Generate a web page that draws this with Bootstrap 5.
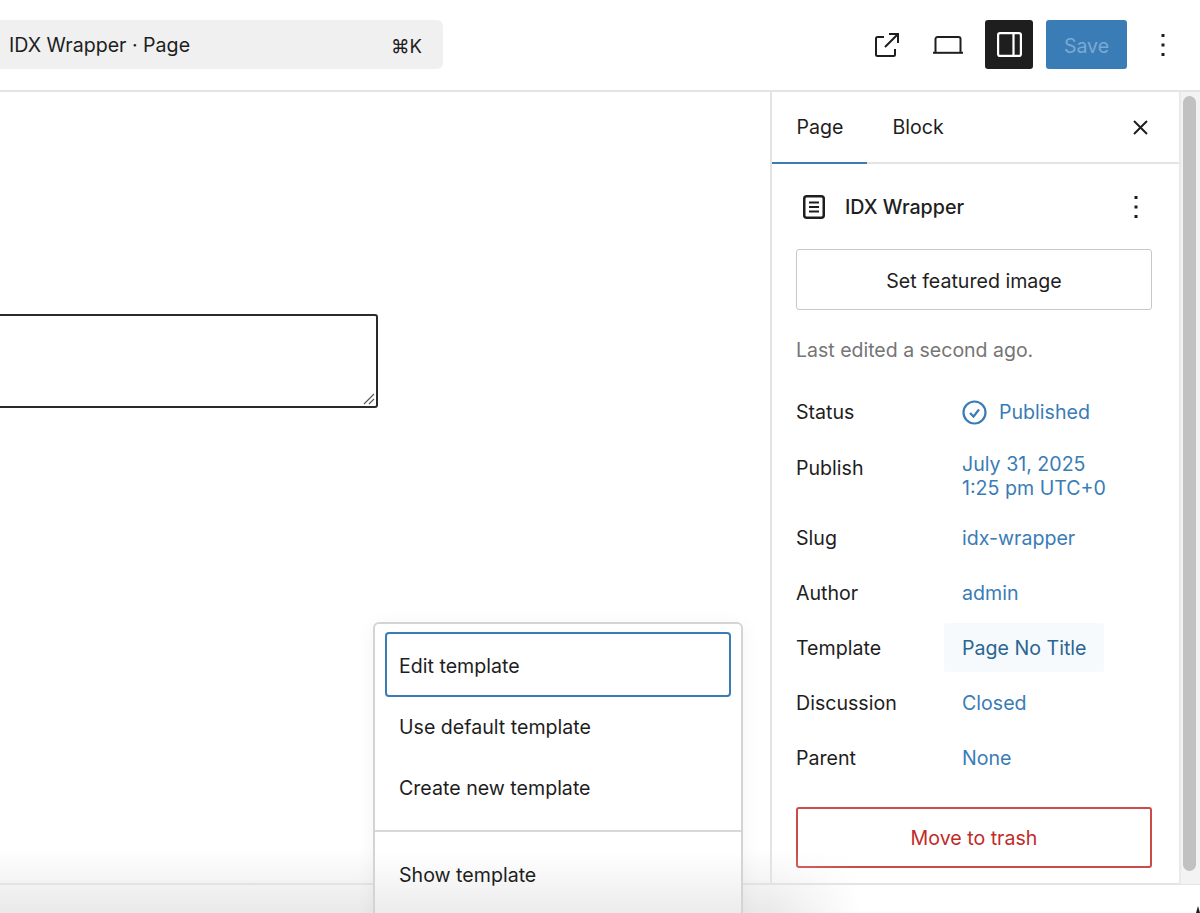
<!DOCTYPE html>
<html lang="en">
<head>
<meta charset="utf-8">
<title>IDX Wrapper</title>
<link href="https://cdn.jsdelivr.net/npm/bootstrap@5.3.0/dist/css/bootstrap.min.css" rel="stylesheet">
<style>
html,body{height:100%;overflow:hidden}
body{font-family:Inter,"Liberation Sans",sans-serif;color:#1e1e1e;background:#fff;font-size:19.6px;line-height:1.2}
.shell{position:relative;width:1200px;height:913px;overflow:hidden}
.topbar{height:92px;border-bottom:2px solid #e4e4e4;padding-top:20px;padding-right:25px}
.cmd{width:443px;height:49px;background:#f0f0f0;border-radius:0 6px 6px 0;padding:3px 21px 0 9px;font-size:19.6px}
.kbd-hint{font-size:18.5px}
.tool-group{height:49px;gap:13px}
.tool{width:48px;height:49px;border-radius:3px}
.tool-dark{background:#1e1e1e}
.save-btn{width:81px;height:49px;background:#3a7cb6;color:#7aaad3;border-radius:3px;font-size:19.5px}
.save-btn:disabled,.save-btn:hover{background:#3a7cb6;color:#7aaad3}
.dots-slot{width:24px;margin-left:11px}
.main-row{height:793px;border-bottom:2px solid #e4e4e4}
.canvas{width:770px}
.sidebar-pane{width:409px;border-left:2px solid #e4e4e4}
.tabs-row{height:72px;border-bottom:2px solid #e4e4e4;padding-right:20px}
.tab-item{height:72px;padding:2px 24px 0;color:#1e1e1e}
.tab-on{border-bottom:2px solid #3a7cb6;margin-bottom:-2px;padding:2px 24px 0 24.5px}
.tab-on + .tab-item{padding-left:25px}
.close-x{width:24px;height:24px;margin-left:auto;margin-right:7px}
.panel{padding:0 25px 0 24px}
.doc-row{height:85px;font-weight:500}
.doc-glyph{margin-left:7px}
.doc-name{margin-left:20px;font-size:19.7px;padding-top:2px}
.doc-more{margin-right:15px}
.outline-btn{height:61px;width:356px;border:1.5px solid #c8c8c8;border-radius:3px;background:#fff;font-size:19.6px;color:#1e1e1e;padding:4px 0 0}
.hint-text{color:#757575;font-size:19.5px;margin:28px 0 0;height:24px;line-height:24px}
.meta-row{display:flex}
.meta-label{width:166px;flex:none;line-height:24px}
.meta-val{color:#3a7cb6;line-height:24px}
.status-glyph{margin-right:12px}
.wrap-status{margin-top:38px;height:24px}
.wrap-publish{margin-top:28px;height:48px}
.wrap-publish .meta-label{padding-top:4px}
.wrap-slug{margin-top:26px;height:24px}
.wrap-plain{margin-top:31px;height:24px}
.tpl-pill{background:#f6fafd;color:#2b6593;padding:12.5px 18px;margin:-13px 0 -12px -18px;border-radius:3px;height:49px}
.trash-btn{height:61px;width:356px;border:2px solid #cc4b48;border-radius:3px;background:#fff;color:#c02b28;font-size:19.6px;margin-top:37px;padding:3px 0 0}
.scroll-track{position:absolute;left:1179px;top:92px;width:21px;height:792px;background:#f3f3f3;border-left:2px solid #e9e9e9}
.scroll-thumb{position:absolute;left:2px;top:4px;width:13px;height:775px;background:#c1c1c1;border-radius:7px}
.text-box{position:absolute;left:-10px;top:314px;width:388px;height:94px;border:2px solid #2a2a2a;border-radius:3px;background:#fff}
.grip{position:absolute;right:0;bottom:0;width:14px;height:14px}
.fade-bottom{position:absolute;left:0;bottom:0;height:63px;width:860px;background:linear-gradient(to bottom,rgba(225,225,225,0),rgba(225,225,225,.75));-webkit-mask-image:linear-gradient(to right,#000 770px,transparent 860px);mask-image:linear-gradient(to right,#000 770px,transparent 860px)}
.popover-menu{position:absolute;left:373px;top:622px;width:370px;height:320px;background:linear-gradient(to bottom,#fff 228px,#ebebeb 291px);border:2px solid #d4d4d4;border-radius:6px;box-shadow:0 3px 20px rgba(0,0,0,.05)}
.menu-top{padding:8px 10px 0;height:208px;border-bottom:2px solid #d8d8d8}
.menu-entry{height:65px;padding:4px 14px 0;margin-bottom:-4px;color:#1e1e1e;border-radius:4px}
.menu-focus{border:2px solid #3a7cb6;padding:4px 12px 0}
.menu-bottom{padding:10px 10px}
.menu-bottom .menu-entry{padding-top:2px}
.cursor-tip{position:absolute;right:0;bottom:0;width:4px;height:7px}
</style>
</head>
<body>
<div class="shell">
  <header class="topbar d-flex justify-content-between align-items-start">
    <div class="cmd d-flex align-items-center justify-content-between">
      <span>IDX Wrapper · Page</span><span class="kbd-hint">⌘K</span>
    </div>
    <div class="tool-group d-flex align-items-center">
      <div class="tool d-flex align-items-center justify-content-center">
        <svg width="24" height="24" viewBox="0 0 24 24" fill="none" stroke="#1e1e1e" stroke-width="2"><path d="M9 4H2.500A1.500 1.500 0 0 0 1 5.500v16A1.500 1.500 0 0 0 2.500 23h16a1.500 1.500 0 0 0 1.500-1.500V16"/><path d="M14 1h9v9M23 1 10 14"/></svg>
      </div>
      <div class="tool d-flex align-items-center justify-content-center">
        <svg width="30" height="18" viewBox="0 0 30 18" fill="none" stroke="#1e1e1e" stroke-width="2"><path d="M2.500 16V3a2 2 0 0 1 2-2h21a2 2 0 0 1 2 2v13"/><path d="M0 16.800h30"/></svg>
      </div>
      <div class="tool tool-dark d-flex align-items-center justify-content-center">
        <svg width="25" height="25" viewBox="0 0 25 25" fill="none" stroke="#fff" stroke-width="2.200"><rect x="1.100" y="1.100" width="22.800" height="22.800" rx="2"/><path d="M16.500 1.100v22.800"/></svg>
      </div>
      <button type="button" class="btn save-btn p-0 pt-1 border-0">Save</button>
      <div class="dots-slot d-flex align-items-center justify-content-center">
        <svg width="6" height="24" viewBox="0 0 6 24" fill="#1e1e1e"><rect x="1.500" y="1" width="3" height="3"/><rect x="1.500" y="10.500" width="3" height="3"/><rect x="1.500" y="20" width="3" height="3"/></svg>
      </div>
    </div>
  </header>
  <div class="main-row d-flex">
    <div class="canvas flex-shrink-0"></div>
    <aside class="sidebar-pane">
      <div class="tabs-row d-flex align-items-center">
        <div class="tab-item tab-on d-flex align-items-center">Page</div>
        <div class="tab-item d-flex align-items-center">Block</div>
        <div class="close-x d-flex align-items-center justify-content-center">
          <svg width="15" height="15" viewBox="0 0 15 15" stroke="#1e1e1e" stroke-width="2" fill="none"><path d="M1 1l13 13M14 1 1 14"/></svg>
        </div>
      </div>
      <div class="panel">
        <div class="doc-row d-flex align-items-center">
          <svg class="doc-glyph" width="22" height="24" viewBox="0 0 22 24" fill="none" stroke="#1e1e1e" stroke-width="2.500"><rect x="1.250" y="1.250" width="19.500" height="21.500" rx="2.500"/><path d="M6 7.500h10M6 12h10M6 16.500h10" stroke-width="2"/></svg>
          <span class="doc-name">IDX Wrapper</span>
          <svg class="ms-auto doc-more" width="6" height="24" viewBox="0 0 6 24" fill="#1e1e1e"><rect x="1.500" y="1" width="3" height="3"/><rect x="1.500" y="10.500" width="3" height="3"/><rect x="1.500" y="20" width="3" height="3"/></svg>
        </div>
        <button type="button" class="btn outline-btn d-block">Set featured image</button>
        <p class="hint-text">Last edited a second ago.</p>
        <div class="meta-row wrap-status"><span class="meta-label">Status</span><span class="meta-val d-flex align-items-center"><svg class="status-glyph" width="25" height="25" viewBox="0 0 25 25" fill="none" stroke="#3a7cb6" stroke-width="2.200"><circle cx="12.500" cy="12.500" r="11"/><path d="M8 13l3.500 3.500L17 9.500"/></svg><span>Published</span></span></div>
        <div class="meta-row wrap-publish"><span class="meta-label">Publish</span><span class="meta-val">July 31, 2025<br>1:25 pm UTC+0</span></div>
        <div class="meta-row wrap-slug"><span class="meta-label">Slug</span><span class="meta-val">idx-wrapper</span></div>
        <div class="meta-row wrap-plain"><span class="meta-label">Author</span><span class="meta-val">admin</span></div>
        <div class="meta-row wrap-plain"><span class="meta-label">Template</span><span class="meta-val tpl-pill">Page No Title</span></div>
        <div class="meta-row wrap-plain"><span class="meta-label">Discussion</span><span class="meta-val">Closed</span></div>
        <div class="meta-row wrap-plain"><span class="meta-label">Parent</span><span class="meta-val">None</span></div>
        <button type="button" class="btn trash-btn d-block">Move to trash</button>
      </div>
    </aside>
  </div>
  <div class="scroll-track"><div class="scroll-thumb"></div></div>
  <div class="text-box">
    <svg class="grip" viewBox="0 0 14 14" stroke="#555" stroke-width="1.100" fill="none"><path d="M2 12 12 2M7 12l5-5"/></svg>
  </div>
  <div class="fade-bottom"></div>
  <div class="popover-menu">
    <div class="menu-top">
      <div class="menu-entry menu-focus d-flex align-items-center">Edit template</div>
      <div class="menu-entry d-flex align-items-center">Use default template</div>
      <div class="menu-entry d-flex align-items-center">Create new template</div>
    </div>
    <div class="menu-bottom">
      <div class="menu-entry d-flex align-items-center">Show template</div>
    </div>
  </div>
  <svg class="cursor-tip" viewBox="0 0 4 7" fill="#1e1e1e"><path d="M2 0 4 7H0z"/></svg>
</div>
<script src="https://cdn.jsdelivr.net/npm/bootstrap@5.3.0/dist/js/bootstrap.bundle.min.js"></script>
</body>
</html>
